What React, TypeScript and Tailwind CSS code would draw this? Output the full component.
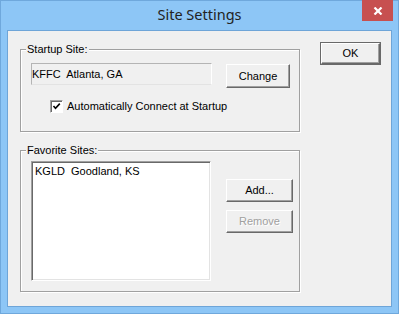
export default function App() {
  const ui = { fontFamily: '"Liberation Sans", Arial, sans-serif' };
  const btn =
    "flex items-center justify-center bg-[#f0f0f0] border-t border-l border-t-white border-l-white border-b border-r border-b-[#696969] border-r-[#696969] shadow-[inset_-1px_-1px_0_#a0a0a0] text-[11px] leading-[13px] text-black";
  const group =
    "relative w-[280px] border border-[#a0a0a0] shadow-[inset_1px_1px_0_#fff,1px_1px_0_#fff]";
  return (
    <div
      className="relative w-[399px] h-[314px] bg-[#8dc6f6] border border-[#6fa8dc] flex flex-col px-[6px] pb-[6px]"
      style={ui}
    >
      <div
        className="h-[29px] flex items-center justify-center text-[14.5px] text-[#222] pb-[1px]"
        style={{ fontFamily: '"Noto Sans", "Open Sans", sans-serif' }}
      >
        Site Settings
      </div>
      <div className="absolute top-[-1px] right-[5px] w-[31px] h-[21px] bg-[#c75050] flex items-center justify-center">
        <svg width="10" height="8" viewBox="0 0 10 8">
          <path d="M1.5 0.5 L8.5 7.5 M8.5 0.5 L1.5 7.5" stroke="#fff" strokeWidth="2.2" />
        </svg>
      </div>

      <div className="flex-1 bg-[#f0f0f0] border border-[#6ea5d8] flex items-start pl-[12px] pt-[11px]">
        <div className="flex flex-col mt-[7px]">
          {/* Startup Site group */}
          <div className={group + " h-[83px]"}>
            <div className="absolute left-[5px] top-[-7px] px-[1px] bg-[#f0f0f0] text-[11px] leading-[13px] text-black">
              Startup Site:
            </div>
            <div className="flex items-start">
              <div className="ml-[10px] mt-[13px] w-[181px] h-[22px] bg-[#f0f0f0] border border-t-[#b4b4b4] border-l-[#b4b4b4] border-b-[#e3e3e3] border-r-[#ffffff] flex items-center text-[11px] leading-[13px] whitespace-pre text-black">
                KFFC  Atlanta, GA
              </div>
              <div className={btn + " ml-[14px] mt-[14px] w-[64px] h-[24px]"}>Change</div>
            </div>
            <div className="flex items-center mt-[12px] ml-[29px]">
              <div className="w-[13px] h-[13px] bg-white border border-t-[#a0a0a0] border-l-[#a0a0a0] border-b-white border-r-white shadow-[inset_1px_1px_0_#696969] flex items-center justify-center">
                <svg width="9" height="9" viewBox="0 0 9 9">
                  <path d="M1.5 4 L3.5 6.2 L7.8 1.6" stroke="#000" strokeWidth="1.6" fill="none" />
                </svg>
              </div>
              <span className="ml-[4px] text-[11px] leading-[13px] text-black">
                Automatically Connect at Startup
              </span>
            </div>
          </div>

          {/* Favorite Sites group */}
          <div className={group + " h-[142px] mt-[18px]"}>
            <div className="absolute left-[5px] top-[-7px] px-[1px] bg-[#f0f0f0] text-[11px] leading-[13px] text-black">
              Favorite Sites:
            </div>
            <div className="flex items-start">
              <div className="ml-[10px] mt-[10px] w-[180px] h-[120px] bg-white border border-t-[#a0a0a0] border-l-[#a0a0a0] border-b-white border-r-white shadow-[inset_1px_1px_0_#696969,inset_-1px_-1px_0_#e3e3e3] pl-[3px] pt-[3px] text-[11px] leading-[13px] whitespace-pre text-black">
                KGLD  Goodland, KS
              </div>
              <div className="flex flex-col ml-[15px] mt-[28px]">
                <div className={btn + " w-[67px] h-[23px]"}>Add...</div>
                <div className={btn + " w-[67px] h-[23px] mt-[8px]"}>
                  <span className="text-[#a0a0a0] [text-shadow:1px_1px_0_#fff]">Remove</span>
                </div>
              </div>
            </div>
          </div>
        </div>

        <div className="ml-[20px] w-[61px] h-[23px] border border-[#696969]">
          <div className={btn + " w-full h-full"}>OK</div>
        </div>
      </div>
    </div>
  );
}
